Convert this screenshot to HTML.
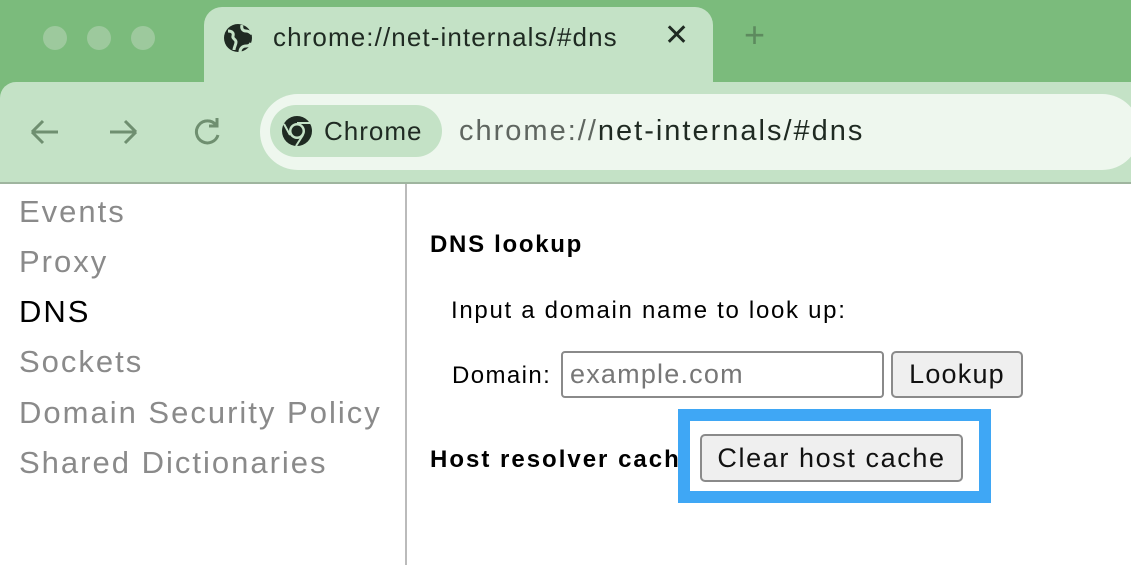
<!DOCTYPE html><html><head><style>
body{margin:0;width:1131px;height:565px;overflow:hidden;background:#fff;font-family:"Liberation Sans",sans-serif;position:relative}
.a{position:absolute;white-space:nowrap}
.dot{position:absolute;top:26px;width:24px;height:24px;border-radius:50%;background:#9dc99d}
.side{position:absolute;left:19px;font-size:31px;color:#8a8a8a;letter-spacing:2px;white-space:nowrap}
.btn{position:absolute;background:#efefef;border:2px solid #8a8a8a;border-radius:5px;font-size:27px;color:#111;box-sizing:border-box;text-align:center;white-space:nowrap}
</style></head><body>
<div class="a" style="left:0;top:0;width:1131px;height:184px;background:#7bbb7c"></div>
<div class="dot" style="left:43px"></div><div class="dot" style="left:87px"></div><div class="dot" style="left:131px"></div>
<div class="a" style="left:204px;top:7px;width:509px;height:90px;background:#c4e2c6;border-radius:18px 18px 0 0"></div>
<div class="a" style="left:0;top:82px;width:1131px;height:100px;background:#c4e2c6;border-radius:16px 0 0 0"></div>
<div class="a" style="left:0;top:182px;width:1131px;height:2px;background:#9fb59f"></div>
<svg class="a" style="left:222px;top:22px" width="32" height="32" viewBox="0 0 32 32"><circle cx="16" cy="16" r="14" fill="#1f2a22"/><path d="M6 9c4 0 6 2 5 5s3 3 3 6-2 5-2 8M20 3c-1 4 1 6 4 6s5 2 6 3M18 30c0-4 3-6 6-6s4-1 5-3" stroke="#c4e2c6" stroke-width="3" fill="none"/></svg>
<div class="a" style="left:273px;top:22px;font-size:26px;color:#1f2a22;letter-spacing:1.1px">chrome://net-internals/#dns</div>
<div class="a" style="left:664px;top:18px;font-size:30px;color:#1f2a22">✕</div>
<div class="a" style="left:744px;top:14px;font-size:36px;color:#5d8a5e">+</div>
<svg class="a" style="left:28px;top:115px" width="200" height="34" viewBox="0 0 200 34" stroke="#6f8f70" stroke-width="3" fill="none"><path d="M4 17h26M4 17l11-11M4 17l11 11"/><path d="M82 17h26M108 17l-11-11M108 17l-11 11"/><path d="M188 10a11 11 0 1 0 2 10"/><path d="M189 3v8h-8"/></svg>
<div class="a" style="left:260px;top:94px;width:880px;height:76px;background:#eef7ee;border-radius:38px"></div>
<div class="a" style="left:270px;top:105px;width:172px;height:52px;background:#c4e2c6;border-radius:26px"></div>
<svg class="a" style="left:281px;top:115px" width="32" height="32" viewBox="0 0 32 32"><circle cx="16" cy="16" r="15" fill="#1f2a22"/><circle cx="16" cy="16" r="8" fill="#c4e2c6"/><circle cx="16" cy="16" r="5.5" fill="#1f2a22"/><path d="M16 8h13M9 20L3 9M22 20l-7 11" stroke="#c4e2c6" stroke-width="2"/></svg>
<div class="a" style="left:324px;top:116px;font-size:26px;color:#1f2a22;letter-spacing:1px">Chrome</div>
<div class="a" style="left:459px;top:115px;font-size:29px;color:#5f6660;letter-spacing:2px">chrome://<span style="color:#1f2a22">net-internals/#dns</span></div>
<div class="a" style="left:405px;top:184px;width:2px;height:381px;background:#bbb"></div>
<div class="side" style="top:194px">Events</div>
<div class="side" style="top:244px">Proxy</div>
<div class="side" style="top:294px;color:#000">DNS</div>
<div class="side" style="top:344px">Sockets</div>
<div class="side" style="top:395px">Domain Security Policy</div>
<div class="side" style="top:445px">Shared Dictionaries</div>
<div class="a" style="left:430px;top:231px;font-size:24px;font-weight:bold;letter-spacing:1.7px">DNS lookup</div>
<div class="a" style="left:451px;top:297px;font-size:24px;letter-spacing:1.7px">Input a domain name to look up:</div>
<div class="a" style="left:452px;top:362px;font-size:24px;letter-spacing:1.4px">Domain:</div>
<div class="a" style="left:561px;top:351px;width:323px;height:47px;border:2px solid #8a8a8a;border-radius:4px;box-sizing:border-box;font-size:27px;color:#777;padding:6px 7px;letter-spacing:1.2px">example.com</div>
<div class="btn" style="left:891px;top:351px;width:132px;height:47px;padding-top:6px;letter-spacing:1.2px">Lookup</div>
<div class="a" style="left:430px;top:446px;font-size:24px;font-weight:bold;letter-spacing:2px">Host resolver cache</div>
<div class="a" style="left:678px;top:409px;width:313px;height:94px;box-sizing:border-box;border:12px solid #3fa7f5;background:#fff"></div>
<div class="btn" style="left:700px;top:434px;width:263px;height:48px;padding-top:7px;letter-spacing:1.6px">Clear host cache</div>
</body></html>
